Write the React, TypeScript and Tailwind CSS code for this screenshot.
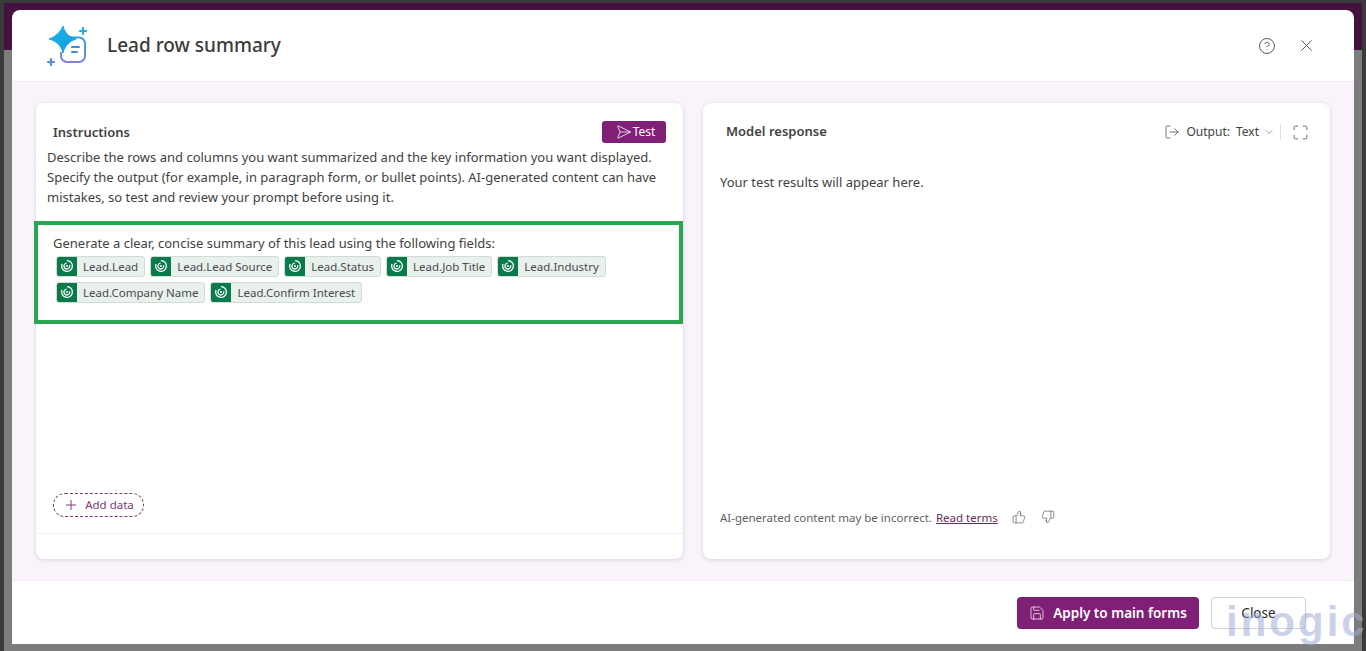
import React from "react";
import { X, CircleHelp, Send, ChevronDown, Plus, Save, ThumbsUp, ThumbsDown, LogOut, Maximize } from "lucide-react";

const font = { fontFamily: '"Noto Sans", "Open Sans", sans-serif' };

function DvIcon() {
  return (
    <svg width="14" height="14" viewBox="0 0 14 14" fill="none" stroke="#ffffff" strokeWidth="1.3">
      <path d="M7 1.6a5.4 5.4 0 1 1-5 3.4" />
      <path d="M9.6 6.2A2.9 2.9 0 1 1 6.6 4.2" />
      <circle cx="7" cy="7" r="1" fill="#ffffff" stroke="none" />
    </svg>
  );
}

function Chip({ label }: { label: string }) {
  return (
    <span className="flex h-[21px] items-stretch overflow-hidden rounded-[3px] border border-[#d0dcd6] bg-[#e9f1ed]">
      <span className="flex w-[20px] items-start justify-center bg-[#0b7a4b] pt-[2px]">
        <DvIcon />
      </span>
      <span className="flex items-center pl-[6px] pr-[6px] text-[11.5px] text-[#4a4a4a]">{label}</span>
    </span>
  );
}

function SparkLogo() {
  return (
    <svg width="42" height="40" viewBox="0 0 42 40" fill="none">
      <defs>
        <linearGradient id="sp" x1="0" y1="0" x2="1" y2="1">
          <stop offset="0" stopColor="#14b4e6" />
          <stop offset="1" stopColor="#1a9be0" />
        </linearGradient>
        <linearGradient id="bx" x1="0" y1="0" x2="0" y2="1">
          <stop offset="0" stopColor="#2fa6dc" />
          <stop offset="1" stopColor="#7d83dc" />
        </linearGradient>
      </defs>
      <path d="M16 11.5h17a6 6 0 0 1 6 6V30a6 6 0 0 1-6 6H21a6 6 0 0 1-6-6v-4" stroke="url(#bx)" strokeWidth="2" />
      <path d="M26 21h7M26 26h5" stroke="#3a8fd8" strokeWidth="2" strokeLinecap="round" />
      <path d="M17 0c1.5 6 4.500 10.500 13 13-6 2-11 6-13 14-2-8-6.500-12-14-14 7-2.500 11.500-7 14-13z" fill="url(#sp)" stroke="url(#sp)" strokeWidth="1" strokeLinejoin="round" />
      <path d="M34 5h6M37 2v6" stroke="#1fb0dc" strokeWidth="2.200" strokeLinecap="round" />
      <path d="M2 36h6M5 33v6" stroke="#5a8fdc" strokeWidth="2.200" strokeLinecap="round" />
    </svg>
  );
}

export default function App() {
  const chips1 = ["Lead.Lead", "Lead.Lead Source", "Lead.Status", "Lead.Job Title", "Lead.Industry"];
  const chips2 = ["Lead.Company Name", "Lead.Confirm Interest"];
  return (
    <div className="relative flex h-[651px] w-[1366px] flex-col overflow-hidden bg-[#6e6e6e]" style={font}>
      <div className="h-[50px] shrink-0 border-x-[4px] border-t-[3px] border-[#3a3a3a] bg-[#43123f]" />
      <div className="flex-1 border-x-[4px] border-[#3a3a3a] bg-[#7c7c7c]" />

      <div className="absolute left-[12px] top-[10px] flex h-[634px] w-[1342px] flex-col overflow-hidden rounded-t-[8px] bg-white">
        <header className="flex h-[72px] shrink-0 items-center border-b border-[#f1ecf1] pl-[34px] pr-[38px]">
          <SparkLogo />
          <h1 className="ml-[19px] text-[19px] font-medium text-[#3b3a39]">Lead row summary</h1>
          <div className="ml-auto flex items-center gap-[21px] text-[#4a4a4a]">
            <CircleHelp size={18} strokeWidth={1.2} />
            <X size={19} strokeWidth={1.2} />
          </div>
        </header>

        <main className="flex min-h-0 flex-1 gap-[20px] bg-[#fbf3fb] px-[24px] pt-[21px] pb-[21px]">
          <section className="flex w-[647px] flex-col rounded-[8px] bg-white shadow-[0_1px_4px_rgba(0,0,0,0.14)]">
            <div className="flex h-[40px] items-end justify-between pl-[17px] pr-[17px]">
              <h2 className="pb-[1px] text-[13px] font-semibold text-[#424242]">Instructions</h2>
              <button className="flex h-[22px] w-[64px] items-center justify-center gap-[4px] rounded-[3px] bg-[#7f1f75] text-[12px] text-white">
                <Send size={16} strokeWidth={1.1} className="rotate-45" />
                Test
              </button>
            </div>
            <p className="mt-[4px] pl-[11px] pr-[12px] text-[13px] leading-[20px] text-[#424242]">
              Describe the rows and columns you want summarized and the key information you want displayed. Specify the output (for example, in paragraph form, or bullet points). AI-generated content can have mistakes, so test and review your prompt before using it.
            </p>
            <div className="ml-[-2px] mt-[14px] h-[103px] border-[4px] border-[#28a652] pl-[15px] pt-[8px]">
              <div className="text-[13px] leading-[20px] text-[#424242]">Generate a clear, concise summary of this lead using the following fields:</div>
              <div className="mt-[3px] flex flex-col gap-[5px] pl-[3px]">
                <div className="flex gap-[5px]">{chips1.map((c) => <Chip key={c} label={c} />)}</div>
                <div className="flex gap-[5px]">{chips2.map((c) => <Chip key={c} label={c} />)}</div>
              </div>
            </div>
            <div className="flex-1" />
            <div className="pl-[17px]">
              <button className="flex h-[24px] w-[91px] items-center justify-center gap-[6px] rounded-full border border-dashed border-[#7a3a72] text-[11.5px] text-[#7f3a78]">
                <Plus size={16} strokeWidth={1.5} />
                Add data
              </button>
            </div>
            <div className="mt-[16px] h-[26px] border-t border-[#f0f0f0]" />
          </section>

          <section className="flex w-[627px] flex-col rounded-[8px] bg-white shadow-[0_1px_4px_rgba(0,0,0,0.14)]">
            <div className="flex h-[58px] items-center justify-between pl-[23px] pr-[21px]">
              <h2 className="text-[13px] font-semibold text-[#424242]">Model response</h2>
              <div className="flex items-center text-[12px] text-[#424242]">
                <LogOut size={16} strokeWidth={1.1} />
                <span className="ml-[6px]">Output:</span>
                <span className="ml-[6px]">Text</span>
                <ChevronDown size={12} strokeWidth={1} className="ml-[4px]" />
                <span className="ml-[5px] h-[16px] w-px bg-[#e0e0e0]" />
                <Maximize size={17} strokeWidth={1.1} className="ml-[11px]" />
              </div>
            </div>
            <p className="mt-[11px] pl-[17px] text-[13px] leading-[20px] text-[#424242]">Your test results will appear here.</p>
            <div className="flex-1" />
            <div className="flex h-[50px] items-start pl-[17px] text-[11.5px] text-[#616161]">
              <span>AI-generated content may be incorrect.</span>
              <a className="ml-[4px] text-[#6a2a63] underline">Read terms</a>
              <ThumbsUp size={14} strokeWidth={1} className="ml-[14px] mt-[1px] text-[#424242]" />
              <ThumbsDown size={14} strokeWidth={1} className="ml-[15px] mt-[1px] text-[#424242]" />
            </div>
          </section>
        </main>

        <footer className="flex h-[64px] shrink-0 items-start justify-end border-t border-[#f1ecf1] pt-[16px] pr-[48px]">
          <button className="flex h-[32px] w-[182px] items-center justify-center gap-[8px] rounded-[4px] bg-[#7f1f75] text-[13.5px] font-semibold text-white">
            <Save size={16} strokeWidth={1.1} />
            Apply to main forms
          </button>
          <button className="ml-[12px] h-[32px] w-[95px] rounded-[4px] border border-[#d1d1d1] text-[13.5px] text-[#242424]">Close</button>
        </footer>
      </div>

      <div className="pointer-events-none absolute left-[1226px] top-[590px] text-[42px] font-bold tracking-[3px] text-[#9fadd6] opacity-55" style={{ fontFamily: '"Liberation Sans", sans-serif' }}>
        inogic
      </div>
    </div>
  );
}
